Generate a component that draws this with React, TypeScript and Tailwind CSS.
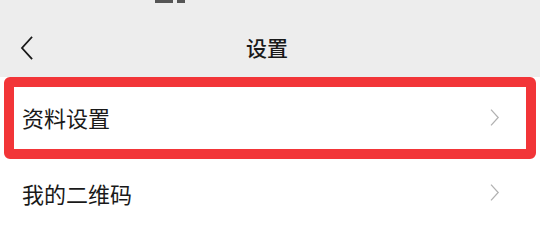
import React from "react";

function Chevron({ dir, className }: { dir: "left" | "right"; className?: string }) {
  return (
    <svg viewBox="0 0 12 24" className={className} fill="none" stroke="currentColor" strokeWidth={1.8} strokeLinecap="square">
      {dir === "left" ? <path d="M11 1.5 L1.5 12 L11 22.5" /> : <path d="M1 1.5 L10.5 12 L1 22.5" />}
    </svg>
  );
}

export default function App() {
  return (
    <div
      className="w-[540px] h-[228px] overflow-hidden bg-[#ededed] text-[#191919]"
      style={{ fontFamily: '"Noto Sans CJK SC", "Noto Sans", sans-serif' }}
    >
      <div className="relative h-[77px]">
        <div className="absolute top-0 left-[155px] flex gap-[4px]">
          <div className="w-[18px] h-[3px] bg-[#555]" />
          <div className="w-[8px] h-[3px] bg-[#555]" />
        </div>
        <div className="flex h-full items-center pt-[18px] px-[20px]">
          <Chevron dir="left" className="w-[13px] h-[24px] text-[#191919]" />
          <div className="flex-1 text-center text-[21px] leading-none font-medium -ml-[13px] pr-[0px] translate-x-[-3px]">设置</div>
        </div>
      </div>
      <div className="bg-white">
        <div className="relative h-[80px] flex items-center px-[22px]">
          <span className="text-[22px] leading-none">资料设置</span>
          <Chevron dir="right" className="ml-auto mr-[18px] w-[10px] h-[17px] text-[#b2b2b2]" />
          <div className="absolute left-[4px] right-[4px] top-0 bottom-[-2px] border-[10px] border-[#f23538] rounded-[6px]" />
        </div>
        <div className="h-[71px] flex items-center px-[22px]">
          <span className="text-[22px] leading-none">我的二维码</span>
          <Chevron dir="right" className="ml-auto mr-[18px] w-[10px] h-[17px] text-[#b2b2b2]" />
        </div>
      </div>
    </div>
  );
}
